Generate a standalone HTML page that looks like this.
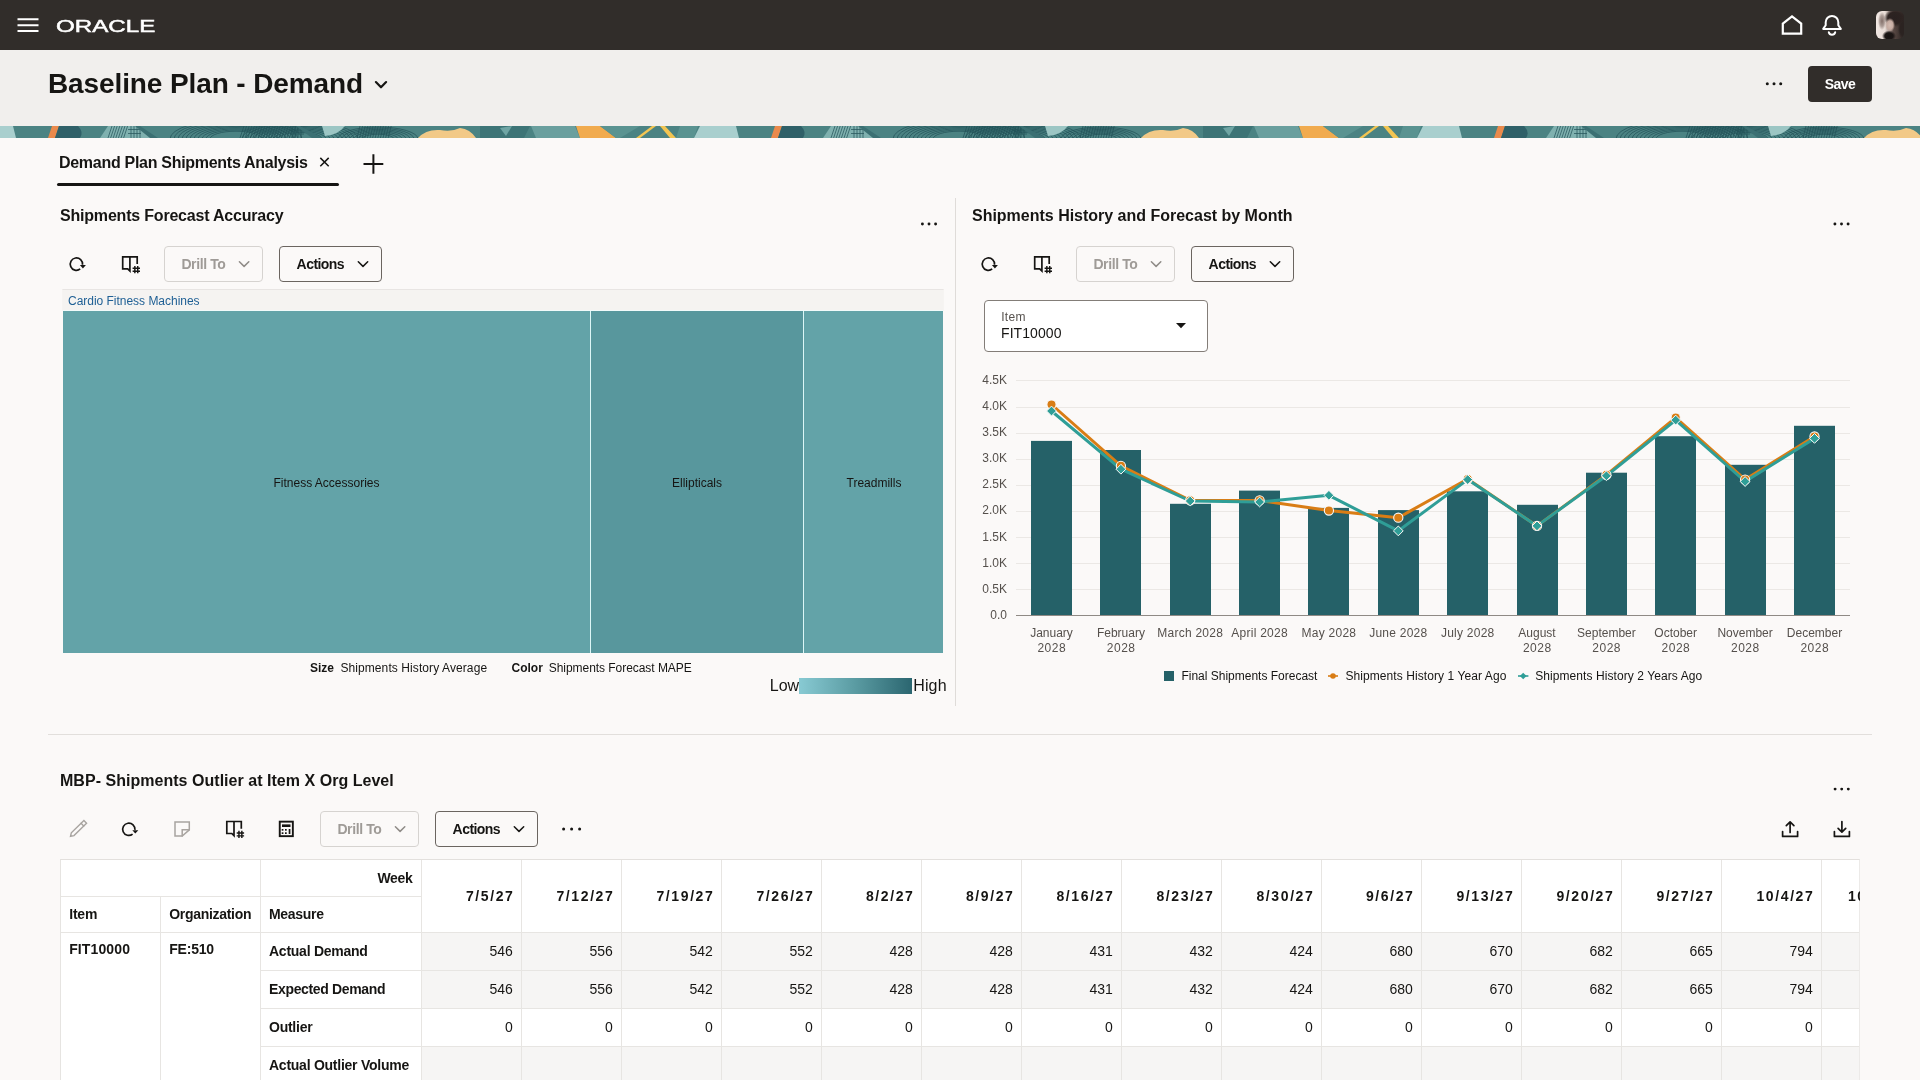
<!DOCTYPE html>
<html lang="en">
<head>
<meta charset="utf-8">
<title>Baseline Plan - Demand</title>
<style>
*{box-sizing:border-box;margin:0;padding:0}
html,body{width:1920px;height:1080px;overflow:hidden}
#wrap{position:absolute;left:0;top:0;width:1920px;height:1080px;will-change:transform}
body{background:#fbf9f8;font-family:"Liberation Sans",sans-serif;color:#161513;position:relative}
.abs{position:absolute}
.t{position:absolute;white-space:nowrap;line-height:1}
#topbar{left:0;top:0;width:1920px;height:50px;background:#312d2a}
#hdr{left:0;top:50px;width:1920px;height:76px;background:#f1efed}
.btn{position:absolute;height:36px;border-radius:4px}
.btn.dis{border:1px solid #d6d3d0}
.btn.act{border:1px solid #6b6560}
svg{position:absolute;overflow:visible}
.ic{fill:none;stroke:#161513;stroke-width:1.7;stroke-linecap:round;stroke-linejoin:round}
.icd{fill:none;stroke:#a8a4a0;stroke-width:1.6;stroke-linecap:round;stroke-linejoin:round}
.cell{position:absolute;background:#fff;border-right:1px solid #e7e5e2;border-bottom:1px solid #e7e5e2}
.cell.g{background:#f6f5f4}
</style>
</head>
<body>
<div id="wrap">

<div id="topbar" class="abs"></div>
<svg style="left:0;top:0" width="1920" height="50" viewBox="0 0 1920 50">
<g stroke="#fff" stroke-width="2" stroke-linecap="butt"><path d="M17.5 19.3H38.5M17.5 25.2H38.5M17.5 31H38.5"/></g>
<path d="M1782.8 23.6L1792 16.3L1801.2 23.6V33.6H1782.8Z" fill="none" stroke="#fff" stroke-width="2.2" stroke-linejoin="miter"/>
<path d="M1823.2 28.9H1840.8 L1838.3 25.2V22.2a6.3 6.3 0 0 0-12.6 0V25.2Z" fill="none" stroke="#fff" stroke-width="2" stroke-linejoin="round"/>
<path d="M1828.8 32.2a3.3 3.3 0 0 0 6.4 0" fill="none" stroke="#fff" stroke-width="2" stroke-linecap="round"/>
</svg>
<div class="t" id="oracle" style="left:56.4px;top:18px;font-size:17px;color:#fff;letter-spacing:0;-webkit-text-stroke:0.5px #fff;transform-origin:0 0;transform:scaleX(1.42)">ORACLE</div>
<div class="abs" style="left:1876px;top:11px;width:28px;height:28px;border-radius:6px;overflow:hidden;background:linear-gradient(90deg,#f1e8e3 0%,#e9ddd7 32%,#5a4a45 62%,#2c2422 100%)"><div class="abs" style="left:0;top:0;width:28px;height:28px;background:radial-gradient(ellipse 11px 9px at 19px 7px,#2a2120 0,#2d2321 65%,rgba(45,35,33,0) 100%)"></div><div class="abs" style="left:0;top:0;width:28px;height:28px;background:radial-gradient(ellipse 4px 9px at 6px 10px,rgba(95,74,68,.75) 0,rgba(95,74,68,.45) 60%,rgba(95,74,68,0) 100%)"></div><div class="abs" style="left:0;top:0;width:28px;height:28px;background:radial-gradient(ellipse 5px 7px at 14px 14px,#d3bcb2 0,#c6aca2 60%,rgba(198,172,162,0) 100%)"></div><div class="abs" style="left:0;top:0;width:28px;height:28px;background:radial-gradient(ellipse 7px 5.5px at 13px 25px,#171211 0,#1c1615 60%,rgba(28,22,21,0) 100%)"></div><div class="abs" style="left:0;top:0;width:28px;height:28px;background:radial-gradient(ellipse 5px 10px at 27px 18px,#2b2321 0,#2b2321 60%,rgba(43,35,33,0) 100%)"></div></div>
<div id="hdr" class="abs"></div>
<div class="t" style="top:70px;font-size:28px;font-weight:bold;letter-spacing:-0.11px;left:48px;">Baseline Plan - Demand</div>
<svg style="left:0;top:50px" width="1920" height="76" viewBox="0 50 1920 76">
<path d="M375.9 82.1L381 87.3L386.1 82.1" fill="none" stroke="#161513" stroke-width="2.2" stroke-linecap="round" stroke-linejoin="round"/>
<g fill="#161513"><circle cx="1767.3" cy="83.7" r="1.5"/><circle cx="1774" cy="83.7" r="1.5"/><circle cx="1780.7" cy="83.7" r="1.5"/></g>
</svg>
<div class="abs" style="left:1808px;top:66px;width:64px;height:36px;border-radius:4px;background:#312d2a"></div>
<div class="t" style="top:77px;font-size:14px;font-weight:bold;color:#fff;letter-spacing:-0.6px;left:1840px;transform:translateX(-50%);">Save</div>
<svg style="left:0;top:126px;overflow:hidden" width="1920" height="12" viewBox="0 0 1920 12">
<g transform="translate(0 0)">
<rect x="0" y="0" width="723" height="12" fill="#4b8383"/>
<path d="M0 0H13L16 12H0Z" fill="#a9cfce"/>
<path d="M52 0H59L55 12H48Z" fill="#ea8a4c"/>
<path d="M59 0H78Q84 6 80 12H55Z" fill="#2f6068"/>
<path d="M108 0H140L152 12H100Z" fill="#7fb1af"/>
<g stroke="#1f4e54" stroke-width="0.75" fill="none" opacity="0.9"><path d="M112.0 0L108.0 12M114.6 0L110.6 12M117.2 0L113.2 12M119.8 0L115.8 12M122.4 0L118.4 12M125.0 0L121.0 12M127.6 0L123.6 12M131 0V12M134 0V12M137 0V12M140 0V12M128 3.5H141M128 7.5H141"/><path d="M210 13A26 7.8 0 0 1 262 13M206 13A30 9.0 0 0 1 266 13M202 13A34 10.2 0 0 1 270 13M198 13A38 11.4 0 0 1 274 13M194 13A42 12.6 0 0 1 278 13M190 13A46 13.8 0 0 1 282 13M186 13A50 15.0 0 0 1 286 13M182 13A54 16.2 0 0 1 290 13M178 13A58 17.4 0 0 1 294 13M174 13A62 18.6 0 0 1 298 13M170 13A66 19.8 0 0 1 302 13"/><path d="M244.0 0L240.0 12M246.6 0L242.6 12M249.2 0L245.2 12M251.8 0L247.8 12M254.4 0L250.4 12M257.0 0L253.0 12M259.6 0L255.6 12M262.2 0L258.2 12M264.8 0L260.8 12M267.4 0L263.4 12M270.0 0L266.0 12M272.6 0L268.6 12M275.2 0L271.2 12M277.8 0L273.8 12M280.4 0L276.4 12M283.0 0L279.0 12M285.6 0L281.6 12M288.2 0L284.2 12M290.8 0L286.8 12M293.4 0L289.4 12M296.0 0L292.0 12M298.6 0L294.6 12"/><path d="M278 13A22 6.6 0 0 1 322 13M274 13A26 7.8 0 0 1 326 13M270 13A30 9.0 0 0 1 330 13M266 13A34 10.2 0 0 1 334 13M262 13A38 11.4 0 0 1 338 13M258 13A42 12.6 0 0 1 342 13M254 13A46 13.8 0 0 1 346 13M250 13A50 15.0 0 0 1 350 13M246 13A54 16.2 0 0 1 354 13M242 13A58 17.4 0 0 1 358 13"/><path d="M292 0V12M295 0V12M298 0V12M301 0V12M290 4H304M290 8H304"/><path d="M362 13A16 4.8 0 0 1 394 13M358 13A20 6.0 0 0 1 398 13M354 13A24 7.2 0 0 1 402 13M350 13A28 8.4 0 0 1 406 13M346 13A32 9.6 0 0 1 410 13M342 13A36 10.8 0 0 1 414 13M338 13A40 12.0 0 0 1 418 13"/><path d="M360.0 0L357.0 12M362.6 0L359.6 12M365.2 0L362.2 12M367.8 0L364.8 12M370.4 0L367.4 12M373.0 0L370.0 12M375.6 0L372.6 12M378.2 0L375.2 12M380.8 0L377.8 12M383.4 0L380.4 12M386.0 0L383.0 12M388.6 0L385.6 12M391.2 0L388.2 12"/></g>
<path d="M140 0L158 12H150L135 0Z" fill="#3b7073"/>
<path d="M300 0L322 12H312L296 0Z" fill="#3b7073"/>
<path d="M322 0H345Q338 9 325 10Z" fill="#9cc6c4"/>
<path d="M418 12Q426 3 440 4Q452 6 460 2Q470 3 476 12Z" fill="#f2c987"/>
<path d="M480 0H530L524 12H480Z" fill="#3d7476"/>
<path d="M500 2L512 0L506 10Z" fill="#6fa5a4"/>
<path d="M531 0H575L580 12H536Z" fill="#6a9f9e"/>
<path d="M576 0H600L616 12H580Z" fill="#f1ab4f"/>
<path d="M600 0H640L620 12H616Z" fill="#5a9391"/>
<path d="M652 0H656L640 12H636Z" fill="#f3c552"/>
<path d="M660 0H665L676 12H670Z" fill="#f3c552"/>
<path d="M680 0H698L694 12H676Z" fill="#5a9391"/>
<path d="M700 0H723V12H694Z" fill="#a9cfce"/>
</g>
<g transform="translate(723 0)">
<rect x="0" y="0" width="723" height="12" fill="#4b8383"/>
<path d="M0 0H13L16 12H0Z" fill="#a9cfce"/>
<path d="M52 0H59L55 12H48Z" fill="#ea8a4c"/>
<path d="M59 0H78Q84 6 80 12H55Z" fill="#2f6068"/>
<path d="M108 0H140L152 12H100Z" fill="#7fb1af"/>
<g stroke="#1f4e54" stroke-width="0.75" fill="none" opacity="0.9"><path d="M112.0 0L108.0 12M114.6 0L110.6 12M117.2 0L113.2 12M119.8 0L115.8 12M122.4 0L118.4 12M125.0 0L121.0 12M127.6 0L123.6 12M131 0V12M134 0V12M137 0V12M140 0V12M128 3.5H141M128 7.5H141"/><path d="M210 13A26 7.8 0 0 1 262 13M206 13A30 9.0 0 0 1 266 13M202 13A34 10.2 0 0 1 270 13M198 13A38 11.4 0 0 1 274 13M194 13A42 12.6 0 0 1 278 13M190 13A46 13.8 0 0 1 282 13M186 13A50 15.0 0 0 1 286 13M182 13A54 16.2 0 0 1 290 13M178 13A58 17.4 0 0 1 294 13M174 13A62 18.6 0 0 1 298 13M170 13A66 19.8 0 0 1 302 13"/><path d="M244.0 0L240.0 12M246.6 0L242.6 12M249.2 0L245.2 12M251.8 0L247.8 12M254.4 0L250.4 12M257.0 0L253.0 12M259.6 0L255.6 12M262.2 0L258.2 12M264.8 0L260.8 12M267.4 0L263.4 12M270.0 0L266.0 12M272.6 0L268.6 12M275.2 0L271.2 12M277.8 0L273.8 12M280.4 0L276.4 12M283.0 0L279.0 12M285.6 0L281.6 12M288.2 0L284.2 12M290.8 0L286.8 12M293.4 0L289.4 12M296.0 0L292.0 12M298.6 0L294.6 12"/><path d="M278 13A22 6.6 0 0 1 322 13M274 13A26 7.8 0 0 1 326 13M270 13A30 9.0 0 0 1 330 13M266 13A34 10.2 0 0 1 334 13M262 13A38 11.4 0 0 1 338 13M258 13A42 12.6 0 0 1 342 13M254 13A46 13.8 0 0 1 346 13M250 13A50 15.0 0 0 1 350 13M246 13A54 16.2 0 0 1 354 13M242 13A58 17.4 0 0 1 358 13"/><path d="M292 0V12M295 0V12M298 0V12M301 0V12M290 4H304M290 8H304"/><path d="M362 13A16 4.8 0 0 1 394 13M358 13A20 6.0 0 0 1 398 13M354 13A24 7.2 0 0 1 402 13M350 13A28 8.4 0 0 1 406 13M346 13A32 9.6 0 0 1 410 13M342 13A36 10.8 0 0 1 414 13M338 13A40 12.0 0 0 1 418 13"/><path d="M360.0 0L357.0 12M362.6 0L359.6 12M365.2 0L362.2 12M367.8 0L364.8 12M370.4 0L367.4 12M373.0 0L370.0 12M375.6 0L372.6 12M378.2 0L375.2 12M380.8 0L377.8 12M383.4 0L380.4 12M386.0 0L383.0 12M388.6 0L385.6 12M391.2 0L388.2 12"/></g>
<path d="M140 0L158 12H150L135 0Z" fill="#3b7073"/>
<path d="M300 0L322 12H312L296 0Z" fill="#3b7073"/>
<path d="M322 0H345Q338 9 325 10Z" fill="#9cc6c4"/>
<path d="M418 12Q426 3 440 4Q452 6 460 2Q470 3 476 12Z" fill="#f2c987"/>
<path d="M480 0H530L524 12H480Z" fill="#3d7476"/>
<path d="M500 2L512 0L506 10Z" fill="#6fa5a4"/>
<path d="M531 0H575L580 12H536Z" fill="#6a9f9e"/>
<path d="M576 0H600L616 12H580Z" fill="#f1ab4f"/>
<path d="M600 0H640L620 12H616Z" fill="#5a9391"/>
<path d="M652 0H656L640 12H636Z" fill="#f3c552"/>
<path d="M660 0H665L676 12H670Z" fill="#f3c552"/>
<path d="M680 0H698L694 12H676Z" fill="#5a9391"/>
<path d="M700 0H723V12H694Z" fill="#a9cfce"/>
</g>
<g transform="translate(1446 0)">
<rect x="0" y="0" width="723" height="12" fill="#4b8383"/>
<path d="M0 0H13L16 12H0Z" fill="#a9cfce"/>
<path d="M52 0H59L55 12H48Z" fill="#ea8a4c"/>
<path d="M59 0H78Q84 6 80 12H55Z" fill="#2f6068"/>
<path d="M108 0H140L152 12H100Z" fill="#7fb1af"/>
<g stroke="#1f4e54" stroke-width="0.75" fill="none" opacity="0.9"><path d="M112.0 0L108.0 12M114.6 0L110.6 12M117.2 0L113.2 12M119.8 0L115.8 12M122.4 0L118.4 12M125.0 0L121.0 12M127.6 0L123.6 12M131 0V12M134 0V12M137 0V12M140 0V12M128 3.5H141M128 7.5H141"/><path d="M210 13A26 7.8 0 0 1 262 13M206 13A30 9.0 0 0 1 266 13M202 13A34 10.2 0 0 1 270 13M198 13A38 11.4 0 0 1 274 13M194 13A42 12.6 0 0 1 278 13M190 13A46 13.8 0 0 1 282 13M186 13A50 15.0 0 0 1 286 13M182 13A54 16.2 0 0 1 290 13M178 13A58 17.4 0 0 1 294 13M174 13A62 18.6 0 0 1 298 13M170 13A66 19.8 0 0 1 302 13"/><path d="M244.0 0L240.0 12M246.6 0L242.6 12M249.2 0L245.2 12M251.8 0L247.8 12M254.4 0L250.4 12M257.0 0L253.0 12M259.6 0L255.6 12M262.2 0L258.2 12M264.8 0L260.8 12M267.4 0L263.4 12M270.0 0L266.0 12M272.6 0L268.6 12M275.2 0L271.2 12M277.8 0L273.8 12M280.4 0L276.4 12M283.0 0L279.0 12M285.6 0L281.6 12M288.2 0L284.2 12M290.8 0L286.8 12M293.4 0L289.4 12M296.0 0L292.0 12M298.6 0L294.6 12"/><path d="M278 13A22 6.6 0 0 1 322 13M274 13A26 7.8 0 0 1 326 13M270 13A30 9.0 0 0 1 330 13M266 13A34 10.2 0 0 1 334 13M262 13A38 11.4 0 0 1 338 13M258 13A42 12.6 0 0 1 342 13M254 13A46 13.8 0 0 1 346 13M250 13A50 15.0 0 0 1 350 13M246 13A54 16.2 0 0 1 354 13M242 13A58 17.4 0 0 1 358 13"/><path d="M292 0V12M295 0V12M298 0V12M301 0V12M290 4H304M290 8H304"/><path d="M362 13A16 4.8 0 0 1 394 13M358 13A20 6.0 0 0 1 398 13M354 13A24 7.2 0 0 1 402 13M350 13A28 8.4 0 0 1 406 13M346 13A32 9.6 0 0 1 410 13M342 13A36 10.8 0 0 1 414 13M338 13A40 12.0 0 0 1 418 13"/><path d="M360.0 0L357.0 12M362.6 0L359.6 12M365.2 0L362.2 12M367.8 0L364.8 12M370.4 0L367.4 12M373.0 0L370.0 12M375.6 0L372.6 12M378.2 0L375.2 12M380.8 0L377.8 12M383.4 0L380.4 12M386.0 0L383.0 12M388.6 0L385.6 12M391.2 0L388.2 12"/></g>
<path d="M140 0L158 12H150L135 0Z" fill="#3b7073"/>
<path d="M300 0L322 12H312L296 0Z" fill="#3b7073"/>
<path d="M322 0H345Q338 9 325 10Z" fill="#9cc6c4"/>
<path d="M418 12Q426 3 440 4Q452 6 460 2Q470 3 476 12Z" fill="#f2c987"/>
<path d="M480 0H530L524 12H480Z" fill="#3d7476"/>
<path d="M500 2L512 0L506 10Z" fill="#6fa5a4"/>
<path d="M531 0H575L580 12H536Z" fill="#6a9f9e"/>
<path d="M576 0H600L616 12H580Z" fill="#f1ab4f"/>
<path d="M600 0H640L620 12H616Z" fill="#5a9391"/>
<path d="M652 0H656L640 12H636Z" fill="#f3c552"/>
<path d="M660 0H665L676 12H670Z" fill="#f3c552"/>
<path d="M680 0H698L694 12H676Z" fill="#5a9391"/>
<path d="M700 0H723V12H694Z" fill="#a9cfce"/>
</g>
</svg>
<div class="t" style="top:155px;font-size:16px;font-weight:bold;letter-spacing:-0.29px;left:59px;">Demand Plan Shipments Analysis</div>
<div class="abs" style="left:56.5px;top:183px;width:282px;height:3px;border-radius:1.5px;background:#161513"></div>
<svg style="left:0;top:140px" width="1920" height="60" viewBox="0 140 1920 60">
<path d="M320.3 157.9L328.7 166.3M328.7 157.9L320.3 166.3" stroke="#161513" stroke-width="1.5" fill="none"/>
<path d="M363.5 164H383.3M373.4 154.2V173.8" stroke="#161513" stroke-width="2" fill="none"/>
</svg>
<div class="t" style="top:208px;font-size:16px;font-weight:bold;letter-spacing:-0.2px;left:60px;">Shipments Forecast Accuracy</div>
<div class="btn dis" style="left:164px;top:246px;width:99px"></div>
<div class="btn act" style="left:279px;top:246px;width:103px"></div>
<div class="t" style="top:257px;font-size:14px;font-weight:bold;color:#9f9b97;letter-spacing:-0.38px;left:181.4px;">Drill To</div>
<div class="t" style="top:257px;font-size:14px;font-weight:bold;letter-spacing:-0.55px;left:296.6px;">Actions</div>
<div class="abs" style="left:62px;top:289px;width:882px;height:22px;background:#f5f3f1;border:1px solid #f6f4f2;border-top-color:#e8e5e3;border-bottom-color:#f2fafa"></div>
<div class="t" style="top:295px;font-size:12px;color:#1e5f94;letter-spacing:-0.02px;left:68px;">Cardio Fitness Machines</div>
<div class="abs" style="left:63px;top:311px;width:527px;height:342px;background:#63a3a8"></div>
<div class="abs" style="left:590px;top:311px;width:1px;height:342px;background:#dcf6f6"></div>
<div class="abs" style="left:591px;top:311px;width:212px;height:342px;background:#58979d"></div>
<div class="abs" style="left:803px;top:311px;width:1px;height:342px;background:#dcf6f6"></div>
<div class="abs" style="left:804px;top:311px;width:139px;height:342px;background:#63a3a8"></div>
<div class="t" style="top:477px;font-size:12px;left:326.5px;transform:translateX(-50%);">Fitness Accessories</div>
<div class="t" style="top:477px;font-size:12px;left:697px;transform:translateX(-50%);">Ellipticals</div>
<div class="t" style="top:477px;font-size:12px;left:874px;transform:translateX(-50%);">Treadmills</div>
<div class="t" style="top:662px;font-size:12px;font-weight:bold;left:310px;">Size</div>
<div class="t" style="top:662px;font-size:12px;letter-spacing:0.09px;left:340.4px;">Shipments History Average</div>
<div class="t" style="top:662px;font-size:12px;font-weight:bold;left:511.5px;">Color</div>
<div class="t" style="top:662px;font-size:12px;letter-spacing:-0.05px;left:548.8px;">Shipments Forecast MAPE</div>
<div class="t" style="top:678px;font-size:16px;left:769.8px;">Low</div>
<div class="abs" style="left:799px;top:678px;width:113px;height:16px;background:linear-gradient(90deg,#88cad3 0%,#5a9ba2 50%,#2b6670 100%)"></div>
<div class="t" style="top:678px;font-size:16px;letter-spacing:0.15px;left:913.2px;">High</div>
<div class="abs" style="left:955px;top:198px;width:1px;height:508px;background:#dfdcd9"></div>
<div class="t" style="top:208px;font-size:16px;font-weight:bold;letter-spacing:-0.01px;left:972px;">Shipments History and Forecast by Month</div>
<div class="btn dis" style="left:1076px;top:246px;width:99px"></div>
<div class="btn act" style="left:1191px;top:246px;width:103px"></div>
<div class="t" style="top:257px;font-size:14px;font-weight:bold;color:#9f9b97;letter-spacing:-0.38px;left:1093.4px;">Drill To</div>
<div class="t" style="top:257px;font-size:14px;font-weight:bold;letter-spacing:-0.55px;left:1208.6px;">Actions</div>
<div class="abs" style="left:984px;top:300px;width:224px;height:51.5px;background:#fff;border:1px solid #837d78;border-radius:4px"></div>
<div class="t" style="top:311px;font-size:12px;color:#57524e;letter-spacing:0.35px;left:1001.2px;">Item</div>
<div class="t" style="top:326px;font-size:14px;letter-spacing:0.08px;left:1001px;">FIT10000</div>
<svg style="left:0;top:360px" width="1920" height="340" viewBox="0 360 1920 340"><path d="M1016 589.5H1850" stroke="#ebe8e5" stroke-width="1"/><path d="M1016 563.5H1850" stroke="#ebe8e5" stroke-width="1"/><path d="M1016 537.5H1850" stroke="#ebe8e5" stroke-width="1"/><path d="M1016 511.5H1850" stroke="#ebe8e5" stroke-width="1"/><path d="M1016 485.5H1850" stroke="#ebe8e5" stroke-width="1"/><path d="M1016 459.5H1850" stroke="#ebe8e5" stroke-width="1"/><path d="M1016 433.5H1850" stroke="#ebe8e5" stroke-width="1"/><path d="M1016 407.5H1850" stroke="#ebe8e5" stroke-width="1"/><path d="M1016 380.5H1850" stroke="#ebe8e5" stroke-width="1"/><rect x="1031" y="440.9" width="41" height="174.1" fill="#256168"/><rect x="1100" y="450.0" width="41" height="165.0" fill="#256168"/><rect x="1170" y="503.8" width="41" height="111.2" fill="#256168"/><rect x="1239" y="490.6" width="41" height="124.4" fill="#256168"/><rect x="1308" y="507.9" width="41" height="107.1" fill="#256168"/><rect x="1378" y="510.1" width="41" height="104.9" fill="#256168"/><rect x="1447" y="491.3" width="41" height="123.7" fill="#256168"/><rect x="1517" y="504.8" width="41" height="110.2" fill="#256168"/><rect x="1586" y="472.7" width="41" height="142.3" fill="#256168"/><rect x="1655" y="436.2" width="41" height="178.8" fill="#256168"/><rect x="1725" y="464.8" width="41" height="150.2" fill="#256168"/><rect x="1794" y="425.8" width="41" height="189.2" fill="#256168"/><path d="M1016 615.5H1850" stroke="#8f8a85" stroke-width="1"/><polyline fill="none" stroke="#d97d15" stroke-width="3" stroke-linejoin="round" points="1051.5,404.5 1120.9,465.8 1190.2,500.4 1259.6,500.4 1328.9,510.5 1398.3,517.7 1467.7,479 1537.0,525.9 1606.4,474.9 1675.7,417.6 1745.1,479.6 1814.5,436.5"/><polyline fill="none" stroke="#2f9e97" stroke-width="3" stroke-linejoin="round" points="1051.5,411 1120.9,469.2 1190.2,501 1259.6,502 1328.9,495.3 1398.3,530.9 1467.7,479.6 1537.0,525.9 1606.4,475.8 1675.7,420.1 1745.1,481.5 1814.5,438.4"/><circle cx="1051.5" cy="404.5" r="4.6" fill="#d97d15" stroke="#fbf9f8" stroke-width="1.1"/><circle cx="1120.9" cy="465.8" r="4.6" fill="#d97d15" stroke="#fbf9f8" stroke-width="1.1"/><circle cx="1190.2" cy="500.4" r="4.6" fill="#d97d15" stroke="#fbf9f8" stroke-width="1.1"/><circle cx="1259.6" cy="500.4" r="4.6" fill="#d97d15" stroke="#fbf9f8" stroke-width="1.1"/><circle cx="1328.9" cy="510.5" r="4.6" fill="#d97d15" stroke="#fbf9f8" stroke-width="1.1"/><circle cx="1398.3" cy="517.7" r="4.6" fill="#d97d15" stroke="#fbf9f8" stroke-width="1.1"/><circle cx="1467.7" cy="479" r="4.6" fill="#d97d15" stroke="#fbf9f8" stroke-width="1.1"/><circle cx="1537.0" cy="525.9" r="4.6" fill="#d97d15" stroke="#fbf9f8" stroke-width="1.1"/><circle cx="1606.4" cy="474.9" r="4.6" fill="#d97d15" stroke="#fbf9f8" stroke-width="1.1"/><circle cx="1675.7" cy="417.6" r="4.6" fill="#d97d15" stroke="#fbf9f8" stroke-width="1.1"/><circle cx="1745.1" cy="479.6" r="4.6" fill="#d97d15" stroke="#fbf9f8" stroke-width="1.1"/><circle cx="1814.5" cy="436.5" r="4.6" fill="#d97d15" stroke="#fbf9f8" stroke-width="1.1"/><path d="M1051.5 406.1L1056.4 411L1051.5 415.9L1046.6 411Z" fill="#2f9e97" stroke="#fbf9f8" stroke-width="1"/><path d="M1120.9 464.3L1125.8 469.2L1120.9 474.09999999999997L1116.0 469.2Z" fill="#2f9e97" stroke="#fbf9f8" stroke-width="1"/><path d="M1190.2 496.1L1195.1 501L1190.2 505.9L1185.3 501Z" fill="#2f9e97" stroke="#fbf9f8" stroke-width="1"/><path d="M1259.6 497.1L1264.5 502L1259.6 506.9L1254.7 502Z" fill="#2f9e97" stroke="#fbf9f8" stroke-width="1"/><path d="M1328.9 490.40000000000003L1333.8 495.3L1328.9 500.2L1324.0 495.3Z" fill="#2f9e97" stroke="#fbf9f8" stroke-width="1"/><path d="M1398.3 526.0L1403.2 530.9L1398.3 535.8L1393.4 530.9Z" fill="#2f9e97" stroke="#fbf9f8" stroke-width="1"/><path d="M1467.7 474.70000000000005L1472.6 479.6L1467.7 484.5L1462.8 479.6Z" fill="#2f9e97" stroke="#fbf9f8" stroke-width="1"/><path d="M1537.0 521.0L1541.9 525.9L1537.0 530.8L1532.1 525.9Z" fill="#2f9e97" stroke="#fbf9f8" stroke-width="1"/><path d="M1606.4 470.90000000000003L1611.3 475.8L1606.4 480.7L1601.5 475.8Z" fill="#2f9e97" stroke="#fbf9f8" stroke-width="1"/><path d="M1675.7 415.20000000000005L1680.6 420.1L1675.7 425.0L1670.8 420.1Z" fill="#2f9e97" stroke="#fbf9f8" stroke-width="1"/><path d="M1745.1 476.6L1750.0 481.5L1745.1 486.4L1740.2 481.5Z" fill="#2f9e97" stroke="#fbf9f8" stroke-width="1"/><path d="M1814.5 433.5L1819.4 438.4L1814.5 443.29999999999995L1809.6 438.4Z" fill="#2f9e97" stroke="#fbf9f8" stroke-width="1"/><rect x="1164" y="671" width="10" height="10" fill="#256168"/><path d="M1328 676H1338" stroke="#d97d15" stroke-width="1.6"/><circle cx="1333" cy="676" r="2.8" fill="#d97d15"/><path d="M1518 676H1528.4" stroke="#2f9e97" stroke-width="1.6"/><path d="M1523.2 672.7L1526.5 676L1523.2 679.3L1519.9 676Z" fill="#2f9e97"/></svg>
<div class="t" style="top:609px;font-size:12px;color:#55504c;right:913.00px;">0.0</div>
<div class="t" style="top:583px;font-size:12px;color:#55504c;right:913.00px;">0.5K</div>
<div class="t" style="top:557px;font-size:12px;color:#55504c;right:913.00px;">1.0K</div>
<div class="t" style="top:531px;font-size:12px;color:#55504c;right:913.00px;">1.5K</div>
<div class="t" style="top:504px;font-size:12px;color:#55504c;right:913.00px;">2.0K</div>
<div class="t" style="top:478px;font-size:12px;color:#55504c;right:913.00px;">2.5K</div>
<div class="t" style="top:452px;font-size:12px;color:#55504c;right:913.00px;">3.0K</div>
<div class="t" style="top:426px;font-size:12px;color:#55504c;right:913.00px;">3.5K</div>
<div class="t" style="top:400px;font-size:12px;color:#55504c;right:913.00px;">4.0K</div>
<div class="t" style="top:374px;font-size:12px;color:#55504c;right:913.00px;">4.5K</div>
<div class="t" style="top:627px;font-size:12px;color:#55504c;left:1051.5px;transform:translateX(-50%);">January</div>
<div class="t" style="top:642px;font-size:12px;color:#55504c;letter-spacing:0.5px;left:1051.5px;transform:translateX(-50%);margin-left:0.25px;">2028</div>
<div class="t" style="top:627px;font-size:12px;color:#55504c;left:1120.9px;transform:translateX(-50%);">February</div>
<div class="t" style="top:642px;font-size:12px;color:#55504c;letter-spacing:0.5px;left:1120.9px;transform:translateX(-50%);margin-left:0.25px;">2028</div>
<div class="t" style="top:627px;font-size:12px;color:#55504c;letter-spacing:0.25px;left:1190.2px;transform:translateX(-50%);">March 2028</div>
<div class="t" style="top:627px;font-size:12px;color:#55504c;letter-spacing:0.25px;left:1259.6px;transform:translateX(-50%);">April 2028</div>
<div class="t" style="top:627px;font-size:12px;color:#55504c;letter-spacing:0.25px;left:1328.9px;transform:translateX(-50%);">May 2028</div>
<div class="t" style="top:627px;font-size:12px;color:#55504c;letter-spacing:0.25px;left:1398.3px;transform:translateX(-50%);">June 2028</div>
<div class="t" style="top:627px;font-size:12px;color:#55504c;letter-spacing:0.25px;left:1467.7px;transform:translateX(-50%);">July 2028</div>
<div class="t" style="top:627px;font-size:12px;color:#55504c;left:1537.0px;transform:translateX(-50%);">August</div>
<div class="t" style="top:642px;font-size:12px;color:#55504c;letter-spacing:0.5px;left:1537.0px;transform:translateX(-50%);margin-left:0.25px;">2028</div>
<div class="t" style="top:627px;font-size:12px;color:#55504c;left:1606.4px;transform:translateX(-50%);">September</div>
<div class="t" style="top:642px;font-size:12px;color:#55504c;letter-spacing:0.5px;left:1606.4px;transform:translateX(-50%);margin-left:0.25px;">2028</div>
<div class="t" style="top:627px;font-size:12px;color:#55504c;left:1675.7px;transform:translateX(-50%);">October</div>
<div class="t" style="top:642px;font-size:12px;color:#55504c;letter-spacing:0.5px;left:1675.7px;transform:translateX(-50%);margin-left:0.25px;">2028</div>
<div class="t" style="top:627px;font-size:12px;color:#55504c;left:1745.1px;transform:translateX(-50%);">November</div>
<div class="t" style="top:642px;font-size:12px;color:#55504c;letter-spacing:0.5px;left:1745.1px;transform:translateX(-50%);margin-left:0.25px;">2028</div>
<div class="t" style="top:627px;font-size:12px;color:#55504c;left:1814.5px;transform:translateX(-50%);">December</div>
<div class="t" style="top:642px;font-size:12px;color:#55504c;letter-spacing:0.5px;left:1814.5px;transform:translateX(-50%);margin-left:0.25px;">2028</div>
<div class="t" style="top:670px;font-size:12px;left:1181.4px;">Final Shipments Forecast</div>
<div class="t" style="top:670px;font-size:12px;letter-spacing:0.08px;left:1345.4px;">Shipments History 1 Year Ago</div>
<div class="t" style="top:670px;font-size:12px;letter-spacing:0.08px;left:1535.2px;">Shipments History 2 Years Ago</div>
<div class="abs" style="left:48px;top:734px;width:1824px;height:1px;background:#e2dfdc"></div>
<div class="t" style="top:773px;font-size:16px;font-weight:bold;letter-spacing:0.03px;left:60px;">MBP- Shipments Outlier at Item X Org Level</div>
<div class="btn dis" style="left:320px;top:811px;width:99px"></div>
<div class="btn act" style="left:435px;top:811px;width:103px"></div>
<div class="t" style="top:822px;font-size:14px;font-weight:bold;color:#9f9b97;letter-spacing:-0.38px;left:337.4px;">Drill To</div>
<div class="t" style="top:822px;font-size:14px;font-weight:bold;letter-spacing:-0.55px;left:452.6px;">Actions</div>
<svg style="left:0;top:0" width="1920" height="1080" viewBox="0 0 1920 1080"><path d="M239.4 261.8L244.1 266.40000000000003L248.79999999999998 261.8" fill="none" stroke="#8f8b87" stroke-width="1.5" stroke-linecap="round" stroke-linejoin="round"/><path d="M358.3 261.8L363 266.40000000000003L367.7 261.8" fill="none" stroke="#161513" stroke-width="1.5" stroke-linecap="round" stroke-linejoin="round"/><g fill="#161513"><circle cx="922.4" cy="224" r="1.45"/><circle cx="929" cy="224" r="1.45"/><circle cx="935.6" cy="224" r="1.45"/></g><path class="ic" style="stroke-linecap:butt" d="M80.19 268.95A6.15 6.15 0 1 1 82.52 264.74"/><path d="M79.90 265.00H85.90L82.90 268.40Z" fill="#161513"/><path class="ic" style="stroke-linejoin:miter;stroke-linecap:butt" d="M129.90 256.80H122.70V268.80H127.70L129.90 271.00V256.80H137.20V264.00"/><path d="M134.85 266.10V273.30M137.75 266.10V273.30M132.60 268.25H140.00M132.60 271.15H140.00" stroke="#161513" stroke-width="1.45" fill="none"/><path d="M1151.3999999999999 261.8L1156.1 266.40000000000003L1160.8 261.8" fill="none" stroke="#8f8b87" stroke-width="1.5" stroke-linecap="round" stroke-linejoin="round"/><path d="M1270.3 261.8L1275 266.40000000000003L1279.7 261.8" fill="none" stroke="#161513" stroke-width="1.5" stroke-linecap="round" stroke-linejoin="round"/><g fill="#161513"><circle cx="1834.9" cy="224" r="1.45"/><circle cx="1841.5" cy="224" r="1.45"/><circle cx="1848.1" cy="224" r="1.45"/></g><path class="ic" style="stroke-linecap:butt" d="M992.19 268.95A6.15 6.15 0 1 1 994.52 264.74"/><path d="M991.90 265.00H997.90L994.90 268.40Z" fill="#161513"/><path class="ic" style="stroke-linejoin:miter;stroke-linecap:butt" d="M1041.90 256.80H1034.70V268.80H1039.70L1041.90 271.00V256.80H1049.20V264.00"/><path d="M1046.85 266.10V273.30M1049.75 266.10V273.30M1044.60 268.25H1052.00M1044.60 271.15H1052.00" stroke="#161513" stroke-width="1.45" fill="none"/><path d="M1176 323H1186L1181 328.2Z" fill="#161513"/><g fill="#161513"><circle cx="1835.1000000000001" cy="789.1" r="1.45"/><circle cx="1841.7" cy="789.1" r="1.45"/><circle cx="1848.3" cy="789.1" r="1.45"/></g><path d="M395.40000000000003 826.8000000000001L400.1 831.4L404.8 826.8000000000001" fill="none" stroke="#8f8b87" stroke-width="1.5" stroke-linecap="round" stroke-linejoin="round"/><path d="M514.3 826.8000000000001L519 831.4L523.7 826.8000000000001" fill="none" stroke="#161513" stroke-width="1.5" stroke-linecap="round" stroke-linejoin="round"/><g fill="#161513"><circle cx="563.6" cy="829" r="1.5"/><circle cx="571.6" cy="829" r="1.5"/><circle cx="579.6" cy="829" r="1.5"/></g><path class="ic" style="stroke-linecap:butt" d="M132.59 834.15A6.15 6.15 0 1 1 134.92 829.94"/><path d="M132.30 830.20H138.30L135.30 833.60Z" fill="#161513"/><path class="ic" style="stroke-linejoin:miter;stroke-linecap:butt" d="M234.00 821.50H226.80V833.50H231.80L234.00 835.70V821.50H241.30V828.70"/><path d="M238.95 830.80V838.00M241.85 830.80V838.00M236.70 832.95H244.10M236.70 835.85H244.10" stroke="#161513" stroke-width="1.45" fill="none"/><g transform="translate(70.5 836.3) rotate(-44.3)"><path class="icd" style="stroke-width:1.4;stroke-linejoin:miter" d="M0 0L3 -1.9H20.6V1.9H3Z"/><path class="icd" style="stroke-width:1.4" d="M16.6 -1.9V1.9"/></g><path class="icd" style="stroke-width:1.5;stroke-linejoin:miter" d="M175 821.9H189.3V829.8L182.2 836.1H175Z"/><path class="icd" style="stroke-width:1.5;stroke-linejoin:miter" d="M189.3 829.8H182.2V836.1"/><rect x="279.75" y="821.65" width="13.1" height="14.5" fill="none" stroke="#161513" stroke-width="1.9"/><rect x="282" y="824.4" width="8.5" height="2.6" fill="#161513"/><g fill="#161513"><rect x="281.7" y="829" width="1.7" height="1.7"/><rect x="285" y="829" width="1.7" height="1.7"/><rect x="281.7" y="832.3" width="1.7" height="1.7"/><rect x="285" y="832.3" width="1.7" height="1.7"/><rect x="288.7" y="829" width="1.7" height="5"/></g><path class="ic" d="M1782.6 831.5V836.4H1797.6V831.5"/><path class="ic" d="M1790.1 832.5V822M1786.3 825.6L1790.1 821.8L1793.9 825.6"/><path class="ic" d="M1834.4 831.5V836.4H1849.4V831.5"/><path class="ic" d="M1841.9 821.5V832M1838.1 828.4L1841.9 832.2L1845.7 828.4"/></svg>
<div class="abs" id="tbl" style="left:60px;top:859px;width:1800px;height:221px;overflow:hidden;background:#fff;border-left:1px solid #e6e4e1;border-top:1px solid #e3e0dd;border-right:1px solid #eceae8">
<div class="cell" style="left:0px;top:0px;width:200px;height:37px"></div>
<div class="cell" style="left:200px;top:0px;width:161px;height:37px"></div>
<div class="cell" style="left:0px;top:37px;width:100px;height:36px"></div>
<div class="cell" style="left:100px;top:37px;width:100px;height:36px"></div>
<div class="cell" style="left:200px;top:37px;width:161px;height:36px"></div>
<div class="cell" style="left:361px;top:0px;width:100px;height:73px"></div>
<div class="cell" style="left:461px;top:0px;width:100px;height:73px"></div>
<div class="cell" style="left:561px;top:0px;width:100px;height:73px"></div>
<div class="cell" style="left:661px;top:0px;width:100px;height:73px"></div>
<div class="cell" style="left:761px;top:0px;width:100px;height:73px"></div>
<div class="cell" style="left:861px;top:0px;width:100px;height:73px"></div>
<div class="cell" style="left:961px;top:0px;width:100px;height:73px"></div>
<div class="cell" style="left:1061px;top:0px;width:100px;height:73px"></div>
<div class="cell" style="left:1161px;top:0px;width:100px;height:73px"></div>
<div class="cell" style="left:1261px;top:0px;width:100px;height:73px"></div>
<div class="cell" style="left:1361px;top:0px;width:100px;height:73px"></div>
<div class="cell" style="left:1461px;top:0px;width:100px;height:73px"></div>
<div class="cell" style="left:1561px;top:0px;width:100px;height:73px"></div>
<div class="cell" style="left:1661px;top:0px;width:100px;height:73px"></div>
<div class="cell" style="left:1761px;top:0px;width:100px;height:73px"></div>
<div class="cell" style="left:0px;top:73px;width:100px;height:160px"></div>
<div class="cell" style="left:100px;top:73px;width:100px;height:160px"></div>
<div class="cell" style="left:200px;top:73px;width:161px;height:38px"></div>
<div class="cell g" style="left:361px;top:73px;width:100px;height:38px"></div>
<div class="cell g" style="left:461px;top:73px;width:100px;height:38px"></div>
<div class="cell g" style="left:561px;top:73px;width:100px;height:38px"></div>
<div class="cell g" style="left:661px;top:73px;width:100px;height:38px"></div>
<div class="cell g" style="left:761px;top:73px;width:100px;height:38px"></div>
<div class="cell g" style="left:861px;top:73px;width:100px;height:38px"></div>
<div class="cell g" style="left:961px;top:73px;width:100px;height:38px"></div>
<div class="cell g" style="left:1061px;top:73px;width:100px;height:38px"></div>
<div class="cell g" style="left:1161px;top:73px;width:100px;height:38px"></div>
<div class="cell g" style="left:1261px;top:73px;width:100px;height:38px"></div>
<div class="cell g" style="left:1361px;top:73px;width:100px;height:38px"></div>
<div class="cell g" style="left:1461px;top:73px;width:100px;height:38px"></div>
<div class="cell g" style="left:1561px;top:73px;width:100px;height:38px"></div>
<div class="cell g" style="left:1661px;top:73px;width:100px;height:38px"></div>
<div class="cell g" style="left:1761px;top:73px;width:100px;height:38px"></div>
<div class="cell" style="left:200px;top:111px;width:161px;height:38px"></div>
<div class="cell g" style="left:361px;top:111px;width:100px;height:38px"></div>
<div class="cell g" style="left:461px;top:111px;width:100px;height:38px"></div>
<div class="cell g" style="left:561px;top:111px;width:100px;height:38px"></div>
<div class="cell g" style="left:661px;top:111px;width:100px;height:38px"></div>
<div class="cell g" style="left:761px;top:111px;width:100px;height:38px"></div>
<div class="cell g" style="left:861px;top:111px;width:100px;height:38px"></div>
<div class="cell g" style="left:961px;top:111px;width:100px;height:38px"></div>
<div class="cell g" style="left:1061px;top:111px;width:100px;height:38px"></div>
<div class="cell g" style="left:1161px;top:111px;width:100px;height:38px"></div>
<div class="cell g" style="left:1261px;top:111px;width:100px;height:38px"></div>
<div class="cell g" style="left:1361px;top:111px;width:100px;height:38px"></div>
<div class="cell g" style="left:1461px;top:111px;width:100px;height:38px"></div>
<div class="cell g" style="left:1561px;top:111px;width:100px;height:38px"></div>
<div class="cell g" style="left:1661px;top:111px;width:100px;height:38px"></div>
<div class="cell g" style="left:1761px;top:111px;width:100px;height:38px"></div>
<div class="cell" style="left:200px;top:149px;width:161px;height:38px"></div>
<div class="cell" style="left:361px;top:149px;width:100px;height:38px"></div>
<div class="cell" style="left:461px;top:149px;width:100px;height:38px"></div>
<div class="cell" style="left:561px;top:149px;width:100px;height:38px"></div>
<div class="cell" style="left:661px;top:149px;width:100px;height:38px"></div>
<div class="cell" style="left:761px;top:149px;width:100px;height:38px"></div>
<div class="cell" style="left:861px;top:149px;width:100px;height:38px"></div>
<div class="cell" style="left:961px;top:149px;width:100px;height:38px"></div>
<div class="cell" style="left:1061px;top:149px;width:100px;height:38px"></div>
<div class="cell" style="left:1161px;top:149px;width:100px;height:38px"></div>
<div class="cell" style="left:1261px;top:149px;width:100px;height:38px"></div>
<div class="cell" style="left:1361px;top:149px;width:100px;height:38px"></div>
<div class="cell" style="left:1461px;top:149px;width:100px;height:38px"></div>
<div class="cell" style="left:1561px;top:149px;width:100px;height:38px"></div>
<div class="cell" style="left:1661px;top:149px;width:100px;height:38px"></div>
<div class="cell" style="left:1761px;top:149px;width:100px;height:38px"></div>
<div class="cell" style="left:200px;top:187px;width:161px;height:38px"></div>
<div class="cell g" style="left:361px;top:187px;width:100px;height:38px"></div>
<div class="cell g" style="left:461px;top:187px;width:100px;height:38px"></div>
<div class="cell g" style="left:561px;top:187px;width:100px;height:38px"></div>
<div class="cell g" style="left:661px;top:187px;width:100px;height:38px"></div>
<div class="cell g" style="left:761px;top:187px;width:100px;height:38px"></div>
<div class="cell g" style="left:861px;top:187px;width:100px;height:38px"></div>
<div class="cell g" style="left:961px;top:187px;width:100px;height:38px"></div>
<div class="cell g" style="left:1061px;top:187px;width:100px;height:38px"></div>
<div class="cell g" style="left:1161px;top:187px;width:100px;height:38px"></div>
<div class="cell g" style="left:1261px;top:187px;width:100px;height:38px"></div>
<div class="cell g" style="left:1361px;top:187px;width:100px;height:38px"></div>
<div class="cell g" style="left:1461px;top:187px;width:100px;height:38px"></div>
<div class="cell g" style="left:1561px;top:187px;width:100px;height:38px"></div>
<div class="cell g" style="left:1661px;top:187px;width:100px;height:38px"></div>
<div class="cell g" style="left:1761px;top:187px;width:100px;height:38px"></div>
</div>
<div class="abs" style="left:60px;top:860px;width:1799.5px;height:220px;overflow:hidden"><div class="abs" style="left:-60px;top:-860px;width:1920px;height:1080px">
<div class="t" style="top:871px;font-size:14px;font-weight:bold;letter-spacing:-0.3px;right:1507.50px;">Week</div>
<div class="t" style="top:907px;font-size:14px;font-weight:bold;letter-spacing:-0.2px;left:69.2px;">Item</div>
<div class="t" style="top:907px;font-size:14px;font-weight:bold;letter-spacing:-0.3px;left:169.2px;">Organization</div>
<div class="t" style="top:907px;font-size:14px;font-weight:bold;letter-spacing:-0.3px;left:269px;">Measure</div>
<div class="t" style="top:889px;font-size:14px;font-weight:bold;letter-spacing:1.6px;right:1407.20px;margin-right:-1.6px;">7/5/27</div>
<div class="t" style="top:889px;font-size:14px;font-weight:bold;letter-spacing:1.6px;right:1307.20px;margin-right:-1.6px;">7/12/27</div>
<div class="t" style="top:889px;font-size:14px;font-weight:bold;letter-spacing:1.6px;right:1207.20px;margin-right:-1.6px;">7/19/27</div>
<div class="t" style="top:889px;font-size:14px;font-weight:bold;letter-spacing:1.6px;right:1107.20px;margin-right:-1.6px;">7/26/27</div>
<div class="t" style="top:889px;font-size:14px;font-weight:bold;letter-spacing:1.6px;right:1007.20px;margin-right:-1.6px;">8/2/27</div>
<div class="t" style="top:889px;font-size:14px;font-weight:bold;letter-spacing:1.6px;right:907.20px;margin-right:-1.6px;">8/9/27</div>
<div class="t" style="top:889px;font-size:14px;font-weight:bold;letter-spacing:1.6px;right:807.20px;margin-right:-1.6px;">8/16/27</div>
<div class="t" style="top:889px;font-size:14px;font-weight:bold;letter-spacing:1.6px;right:707.20px;margin-right:-1.6px;">8/23/27</div>
<div class="t" style="top:889px;font-size:14px;font-weight:bold;letter-spacing:1.6px;right:607.20px;margin-right:-1.6px;">8/30/27</div>
<div class="t" style="top:889px;font-size:14px;font-weight:bold;letter-spacing:1.6px;right:507.20px;margin-right:-1.6px;">9/6/27</div>
<div class="t" style="top:889px;font-size:14px;font-weight:bold;letter-spacing:1.6px;right:407.20px;margin-right:-1.6px;">9/13/27</div>
<div class="t" style="top:889px;font-size:14px;font-weight:bold;letter-spacing:1.6px;right:307.20px;margin-right:-1.6px;">9/20/27</div>
<div class="t" style="top:889px;font-size:14px;font-weight:bold;letter-spacing:1.6px;right:207.20px;margin-right:-1.6px;">9/27/27</div>
<div class="t" style="top:889px;font-size:14px;font-weight:bold;letter-spacing:1.6px;right:107.20px;margin-right:-1.6px;">10/4/27</div>
<div class="t" style="top:889px;font-size:14px;font-weight:bold;letter-spacing:1.6px;right:7.20px;margin-right:-1.6px;">10/11/27</div>
<div class="t" style="top:942px;font-size:14px;font-weight:bold;letter-spacing:0.12px;left:69.2px;">FIT10000</div>
<div class="t" style="top:942px;font-size:14px;font-weight:bold;letter-spacing:-0.2px;left:169.2px;">FE:510</div>
<div class="t" style="top:944px;font-size:14px;font-weight:bold;letter-spacing:-0.25px;left:269px;">Actual Demand</div>
<div class="t" style="top:982px;font-size:14px;font-weight:bold;letter-spacing:-0.35px;left:269px;">Expected Demand</div>
<div class="t" style="top:1020px;font-size:14px;font-weight:bold;letter-spacing:-0.25px;left:269px;">Outlier</div>
<div class="t" style="top:1058px;font-size:14px;font-weight:bold;letter-spacing:-0.25px;left:269px;">Actual Outlier Volume</div>
<div class="t" style="top:944px;font-size:14px;right:1407.20px;">546</div>
<div class="t" style="top:982px;font-size:14px;right:1407.20px;">546</div>
<div class="t" style="top:1020px;font-size:14px;right:1407.20px;">0</div>
<div class="t" style="top:944px;font-size:14px;right:1307.20px;">556</div>
<div class="t" style="top:982px;font-size:14px;right:1307.20px;">556</div>
<div class="t" style="top:1020px;font-size:14px;right:1307.20px;">0</div>
<div class="t" style="top:944px;font-size:14px;right:1207.20px;">542</div>
<div class="t" style="top:982px;font-size:14px;right:1207.20px;">542</div>
<div class="t" style="top:1020px;font-size:14px;right:1207.20px;">0</div>
<div class="t" style="top:944px;font-size:14px;right:1107.20px;">552</div>
<div class="t" style="top:982px;font-size:14px;right:1107.20px;">552</div>
<div class="t" style="top:1020px;font-size:14px;right:1107.20px;">0</div>
<div class="t" style="top:944px;font-size:14px;right:1007.20px;">428</div>
<div class="t" style="top:982px;font-size:14px;right:1007.20px;">428</div>
<div class="t" style="top:1020px;font-size:14px;right:1007.20px;">0</div>
<div class="t" style="top:944px;font-size:14px;right:907.20px;">428</div>
<div class="t" style="top:982px;font-size:14px;right:907.20px;">428</div>
<div class="t" style="top:1020px;font-size:14px;right:907.20px;">0</div>
<div class="t" style="top:944px;font-size:14px;right:807.20px;">431</div>
<div class="t" style="top:982px;font-size:14px;right:807.20px;">431</div>
<div class="t" style="top:1020px;font-size:14px;right:807.20px;">0</div>
<div class="t" style="top:944px;font-size:14px;right:707.20px;">432</div>
<div class="t" style="top:982px;font-size:14px;right:707.20px;">432</div>
<div class="t" style="top:1020px;font-size:14px;right:707.20px;">0</div>
<div class="t" style="top:944px;font-size:14px;right:607.20px;">424</div>
<div class="t" style="top:982px;font-size:14px;right:607.20px;">424</div>
<div class="t" style="top:1020px;font-size:14px;right:607.20px;">0</div>
<div class="t" style="top:944px;font-size:14px;right:507.20px;">680</div>
<div class="t" style="top:982px;font-size:14px;right:507.20px;">680</div>
<div class="t" style="top:1020px;font-size:14px;right:507.20px;">0</div>
<div class="t" style="top:944px;font-size:14px;right:407.20px;">670</div>
<div class="t" style="top:982px;font-size:14px;right:407.20px;">670</div>
<div class="t" style="top:1020px;font-size:14px;right:407.20px;">0</div>
<div class="t" style="top:944px;font-size:14px;right:307.20px;">682</div>
<div class="t" style="top:982px;font-size:14px;right:307.20px;">682</div>
<div class="t" style="top:1020px;font-size:14px;right:307.20px;">0</div>
<div class="t" style="top:944px;font-size:14px;right:207.20px;">665</div>
<div class="t" style="top:982px;font-size:14px;right:207.20px;">665</div>
<div class="t" style="top:1020px;font-size:14px;right:207.20px;">0</div>
<div class="t" style="top:944px;font-size:14px;right:107.20px;">794</div>
<div class="t" style="top:982px;font-size:14px;right:107.20px;">794</div>
<div class="t" style="top:1020px;font-size:14px;right:107.20px;">0</div>
</div></div>
</div>
</body>
</html>
